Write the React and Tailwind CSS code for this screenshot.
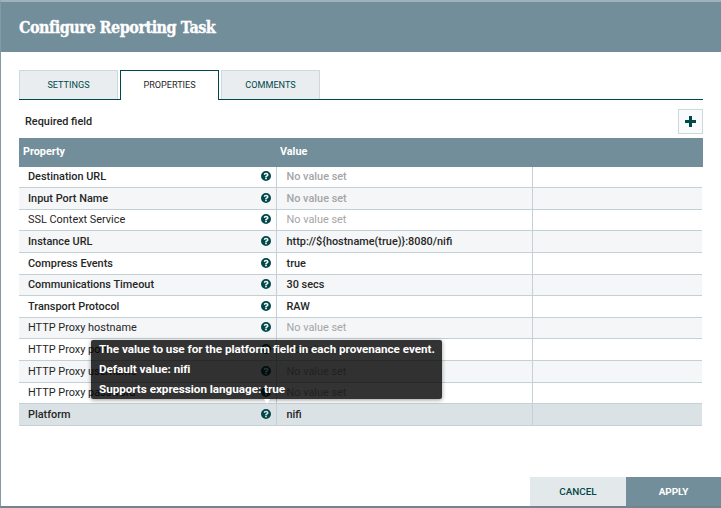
const rows = [
  { name: "Destination URL", value: null, required: true, h: "h-[21px]" },
  { name: "Input Port Name", value: null, required: true, h: "h-[22px]" },
  { name: "SSL Context Service", value: null, required: false, h: "h-[21px]" },
  { name: "Instance URL", value: "http://${hostname(true)}:8080/nifi", required: true, h: "h-[22px]" },
  { name: "Compress Events", value: "true", required: true, h: "h-[22px]" },
  { name: "Communications Timeout", value: "30 secs", required: true, h: "h-[21px]" },
  { name: "Transport Protocol", value: "RAW", required: true, h: "h-[22px]" },
  { name: "HTTP Proxy hostname", value: null, required: false, h: "h-[21px]" },
  { name: "HTTP Proxy port", value: null, required: false, h: "h-[22px]" },
  { name: "HTTP Proxy username", value: null, required: false, h: "h-[22px]" },
  { name: "HTTP Proxy password", value: null, required: false, h: "h-[21px]" },
  { name: "Platform", value: "nifi", required: true, h: "h-[22px]", selected: true },
];

function HelpIcon() {
  return (
    <svg viewBox="0 0 1536 1536" className="mb-[2px] size-[10px] shrink-0 fill-[#004849]">
      <path
        fillRule="evenodd"
        d="M768 0a768 768 0 1 0 0 1536a768 768 0 1 0 0-1536ZM896 1248v-192q0-14-9-23t-23-9H672q-14 0-23 9t-9 23v192q0 14 9 23t23 9h192q14 0 23-9t9-23ZM1152 576q0-88-55.500-163T958 297t-170-41q-243 0-371 213q-15 24 8 42l132 100q7 6 19 6q16 0 25-12q53-68 86-92q34-24 86-24q48 0 85.500 26t37.500 59q0 38-20 61t-68 45q-63 28-115.500 86.500T640 892v36q0 14 9 23t23 9h192q14 0 23-9t9-23q0-19 21.500-49.500T972 829q32-18 49-28.500t46-35t44.500-48t28-60.500t12.500-81Z"
      />
    </svg>
  );
}

function Row({ row, index }) {
  const bg = row.selected ? "bg-[#dbe2e5]" : index % 2 ? "bg-[#f4f6f7]" : "bg-white";
  const weight = row.required ? "font-medium" : "font-normal";
  return (
    <div className={`flex w-[683px] border-b border-[#c3d0d6] ${bg} ${row.h} ${weight}`}>
      <div className="flex w-[258px] items-center justify-between border-r border-[#c3d0d6] pr-[5px] pl-[9px]">
        <span>{row.name}</span>
        <HelpIcon />
      </div>
      <div className="flex w-[256px] items-center border-r border-[#c3d0d6] pl-[9.500px]">
        {row.value === null ? <span className="text-[#a5a5a5]">No value set</span> : <span>{row.value}</span>}
      </div>
    </div>
  );
}

function Tooltip() {
  return (
    <div className="absolute top-[340px] left-[91px] flex h-[59px] w-[351px] flex-col rounded-xs bg-black/80 pl-2 text-[11.7px] leading-5 font-bold tracking-[-0.03px] text-white shadow-[0_1px_4px_rgba(0,0,0,0.4)]">
      <span className="-mt-px">The value to use for the platform field in each provenance event.</span>
      <span>Default value: nifi</span>
      <span>Supports expression language: true</span>
      <svg viewBox="0 0 6 5" className="absolute top-[59px] left-[173px] h-[5px] w-[6px] fill-white">
        <path d="M0 0h6L3 5Z" />
      </svg>
    </div>
  );
}

export default function App() {
  return (
    <div className="relative h-[508px] w-[721px] overflow-hidden bg-[#788890] font-[Roboto,'Liberation_Sans',sans-serif] text-[10.9px] leading-[14px] text-[#262626]">
      <div className="flex h-[508px] flex-col border-t-2 border-b-2 border-l border-t-[#a0b2bb] border-b-[#75838a] border-l-[#8499a3] bg-white">
        <header className="flex h-[50px] shrink-0 items-center bg-[#728e9b] pt-px pl-[18px]">
          <h1 className="font-['Roboto_Slab','DejaVu_Serif_Condensed','DejaVu_Serif',serif] text-[16px] font-bold tracking-[-0.49px] whitespace-nowrap text-white [-webkit-text-stroke:0.3px_white]">
            Configure Reporting Task
          </h1>
        </header>

        <main className="flex grow flex-col pt-[18px] pl-[18px]">
          <nav className="flex h-[30px] w-[684px] shrink-0 gap-[2px] text-[9.1px] shadow-[inset_0_-1px_0_#004849]">
            <div className="mb-px flex w-[99px] items-center justify-center border border-b-0 border-[#ccdadb] bg-[#e9edf0] text-[#004849]">
              SETTINGS
            </div>
            <div className="flex w-[99px] items-center justify-center border border-b-0 border-[#004849] bg-white pb-px">
              PROPERTIES
            </div>
            <div className="mb-px flex w-[99px] items-center justify-center border border-b-0 border-[#ccdadb] bg-[#e9edf0] text-[#004849]">
              COMMENTS
            </div>
          </nav>

          <div className="mt-[9px] flex h-[25px] w-[684px] shrink-0 items-center justify-between pl-[6px]">
            <span className="font-medium">Required field</span>
            <button className="flex size-[25px] items-center justify-center border border-[#ccdadb] bg-[#f9fafb]">
              <svg viewBox="0 0 11 11" className="size-[11px] fill-[#004849]">
                <path d="M4 0h3v4h4v3H7v4H4V7H0V4h4Z" />
              </svg>
            </button>
          </div>

          <div className="mt-[4px] flex h-[29px] w-[684px] shrink-0 items-center bg-[#728e9b] pb-[2px] pl-1 text-[10.8px] font-bold text-white">
            <span className="w-[257px]">Property</span>
            <span>Value</span>
          </div>
          {rows.map((row, i) => (
            <Row key={row.name} row={row} index={i} />
          ))}
        </main>

        <footer className="flex h-[29px] shrink-0 justify-end text-[9.9px] font-medium">
          <button className="w-24 bg-[#e3e8eb] text-[#004849]">CANCEL</button>
          <button className="w-[95px] bg-[#728e9b] font-bold text-white">APPLY</button>
        </footer>
      </div>
      <Tooltip />
    </div>
  );
}
